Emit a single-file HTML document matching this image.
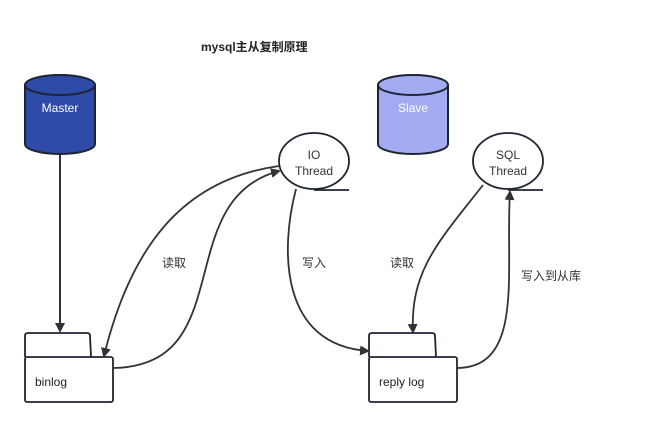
<!DOCTYPE html>
<html><head><meta charset="utf-8"><style>
html,body{margin:0;padding:0;background:#fff;width:659px;height:427px;overflow:hidden}
svg{display:block}
text{font-family:"Liberation Sans","Noto Sans CJK SC",sans-serif}
</style></head><body>
<svg width="659" height="427" viewBox="0 0 659 427" xmlns="http://www.w3.org/2000/svg">
<defs>
<marker id="a" markerWidth="10" markerHeight="10" refX="8" refY="5" orient="auto" markerUnits="userSpaceOnUse">
<path d="M0,0 L10,5 L0,10 Z" fill="#333"/></marker>
</defs>
<text x="201" y="51" font-size="12" font-weight="bold" fill="#222">mysql主从复制原理</text>
<path d="M25,85 L25,144 A35,10 0 0 0 95,144 L95,85" fill="#2f4ba8" stroke="#1e2433" stroke-width="2"/>
<ellipse cx="60" cy="85" rx="35" ry="10" fill="#2f4ba8" stroke="#1e2433" stroke-width="2"/>
<text x="60" y="112" font-size="12" fill="#fff" text-anchor="middle">Master</text>
<path d="M378,85 L378,144 A35,10 0 0 0 448,144 L448,85" fill="#a3acf3" stroke="#1e2433" stroke-width="2"/>
<ellipse cx="413" cy="85" rx="35" ry="10" fill="#a3acf3" stroke="#1e2433" stroke-width="2"/>
<text x="413" y="112" font-size="12" fill="#fff" text-anchor="middle">Slave</text>
<line x1="60" y1="155" x2="60" y2="331" stroke="#333" stroke-width="2" marker-end="url(#a)"/>
<path d="M25,357 L25,336 Q25,333 28,333 L87,333 Q90,333 90,336 L91,357" fill="#fff" stroke="#1e2433" stroke-width="1.8"/>
<rect x="25" y="357" width="88" height="45" rx="2" fill="#fff" stroke="#1e2433" stroke-width="1.8"/>
<text x="35" y="386" font-size="12" fill="#222">binlog</text>
<path d="M369,357 L369,336 Q369,333 372,333 L432,333 Q435,333 435,336 L436,357" fill="#fff" stroke="#1e2433" stroke-width="1.8"/>
<rect x="369" y="357" width="88" height="45" rx="2" fill="#fff" stroke="#1e2433" stroke-width="1.8"/>
<text x="379" y="386" font-size="12" fill="#222">reply log</text>
<ellipse cx="314" cy="161" rx="35" ry="28" fill="#fff" stroke="#1e2433" stroke-width="1.8"/>
<line x1="314" y1="190" x2="349" y2="190" stroke="#1e2433" stroke-width="1.8"/>
<text x="314" y="159" font-size="12" fill="#333" text-anchor="middle">IO</text>
<text x="314" y="175" font-size="12" fill="#333" text-anchor="middle">Thread</text>
<ellipse cx="508" cy="161" rx="35" ry="28" fill="#fff" stroke="#1e2433" stroke-width="1.8"/>
<line x1="508" y1="190" x2="543" y2="190" stroke="#1e2433" stroke-width="1.8"/>
<text x="508" y="159" font-size="12" fill="#333" text-anchor="middle">SQL</text>
<text x="508" y="175" font-size="12" fill="#333" text-anchor="middle">Thread</text>
<path d="M279,166 C180,180 130,250 104,356" fill="none" stroke="#333" stroke-width="1.8" marker-end="url(#a)"/>
<path d="M114,368 C240,365 170,200 279,171" fill="none" stroke="#333" stroke-width="1.8" marker-end="url(#a)"/>
<path d="M296,189 C280,250 280,345 368,351" fill="none" stroke="#333" stroke-width="1.8" marker-end="url(#a)"/>
<path d="M483,185 C440,240 410,270 413,332" fill="none" stroke="#333" stroke-width="1.8" marker-end="url(#a)"/>
<path d="M457,368 C525,368 505,270 510,192" fill="none" stroke="#333" stroke-width="1.8" marker-end="url(#a)"/>
<text x="162" y="267" font-size="12" fill="#333">读取</text>
<text x="302" y="267" font-size="12" fill="#333">写入</text>
<text x="390" y="267" font-size="12" fill="#333">读取</text>
<text x="521" y="280" font-size="12" fill="#333">写入到从库</text>
</svg>
</body></html>
